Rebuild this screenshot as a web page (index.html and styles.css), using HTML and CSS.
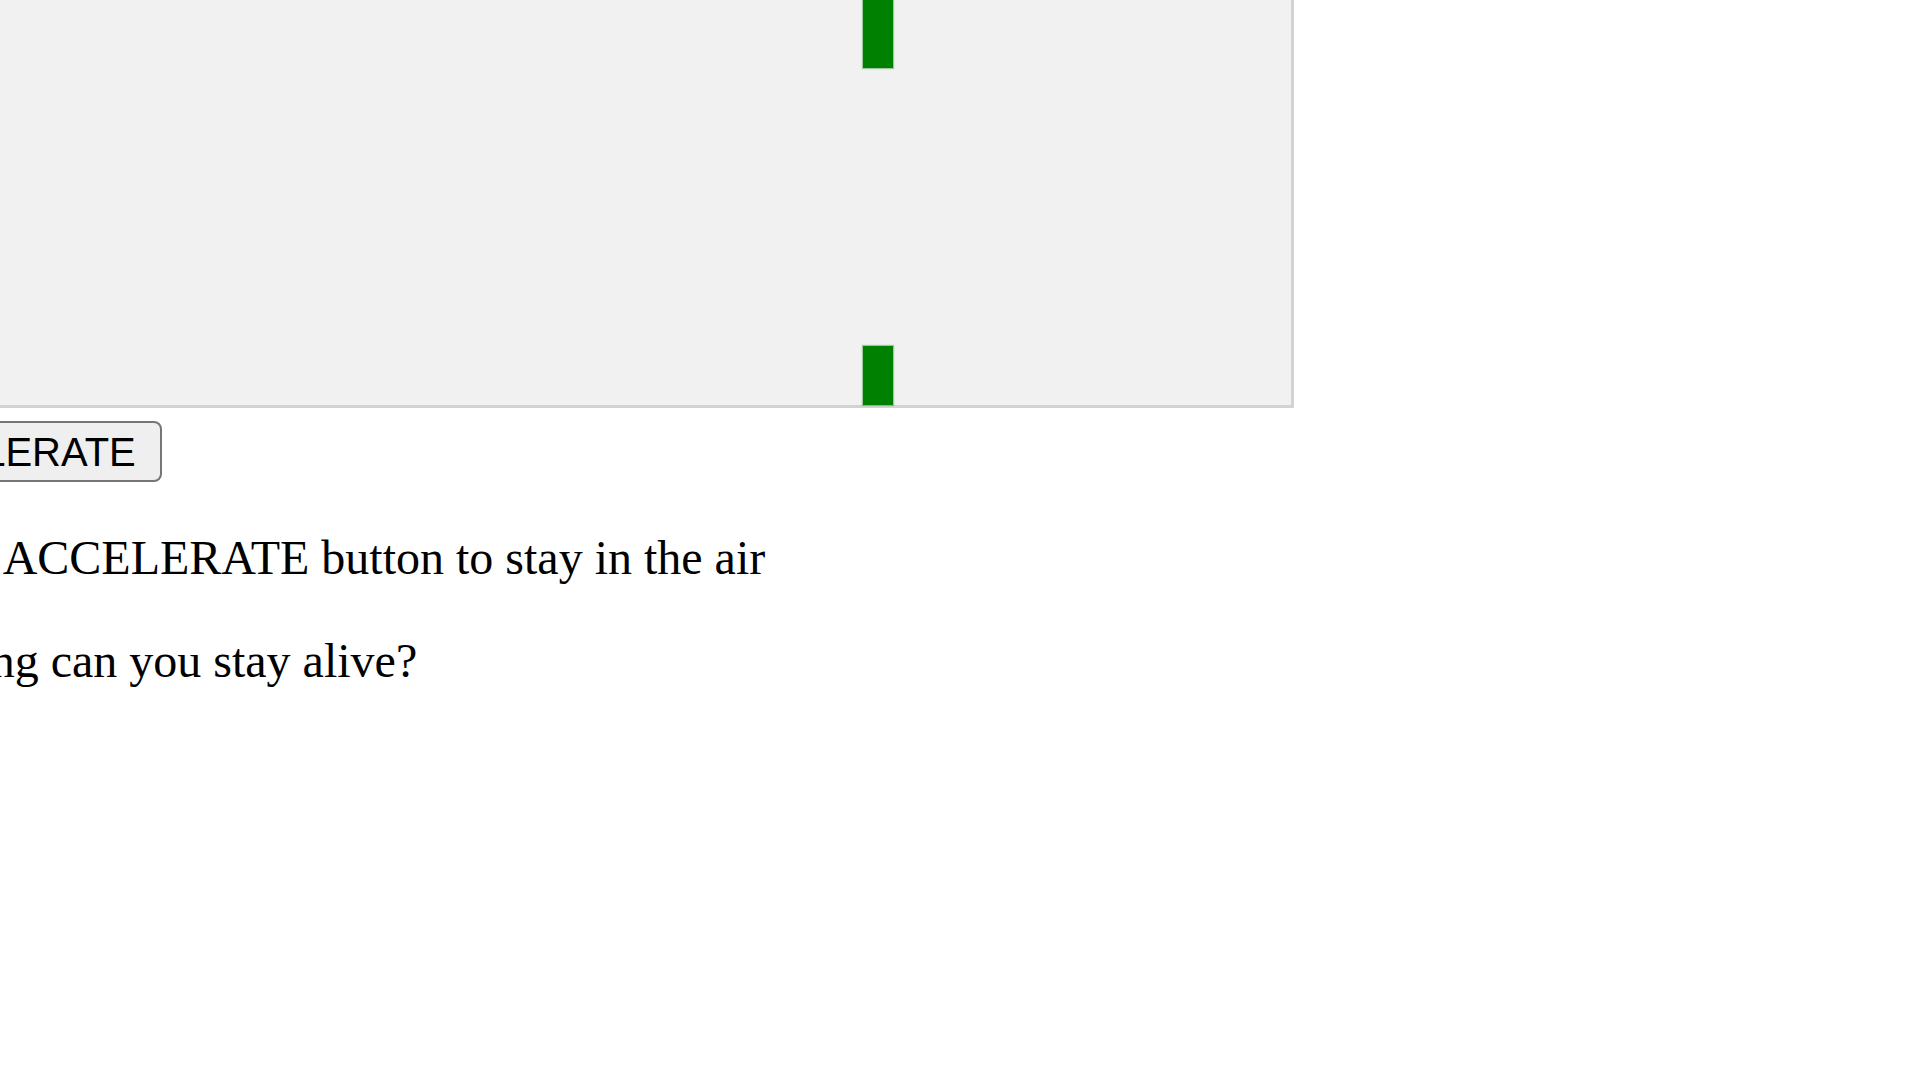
FILE: index.html
```html
<!DOCTYPE html>
<html>
<head>
<meta charset="utf-8">
<title>Game</title>
<link rel="stylesheet" href="styles.css">
</head>
<body>
<div class="stage">
  <div class="game-canvas">
    <div class="obstacle obstacle-top"></div>
    <div class="obstacle obstacle-bottom"></div>
  </div>
  <button class="accel">ACCELERATE</button>
  <p class="info">Use the ACCELERATE button to stay in the air</p>
  <p class="info">How long can you stay alive?</p>
</div>
</body>
</html>
```
FILE: styles.css
```css
html, body {
  margin: 0;
  padding: 0;
  overflow: hidden;
  background: #ffffff;
}
body {
  width: 1920px;
  height: 1080px;
  font-family: "Liberation Serif", "Times New Roman", serif;
  font-size: 48px;
  color: #000;
}
.stage {
  margin-left: -152px;
  margin-top: -408px;
}
.game-canvas {
  position: relative;
  width: 1440px;
  height: 810px;
  border: 3px solid #d3d3d3;
  background: #f1f1f1;
}
.obstacle {
  position: absolute;
  left: 1012px;
  width: 30px;
  background: #008000;
  box-shadow: 0 0 1px 1px rgba(0, 128, 0, 0.35);
}
.obstacle-top {
  top: 0;
  height: 473px;
}
.obstacle-bottom {
  top: 751px;
  height: 59px;
}
.accel {
  display: block;
  margin-top: 13px;
  font-family: "Liberation Sans", Arial, sans-serif;
  font-size: 40px;
  line-height: 46px;
  padding: 6px 24px 5px 22px;
  border: 2px solid #767676;
  border-radius: 8px;
  background: #efefef;
  color: #000;
}
.info {
  margin: 48px 0;
  line-height: normal;
}
```
